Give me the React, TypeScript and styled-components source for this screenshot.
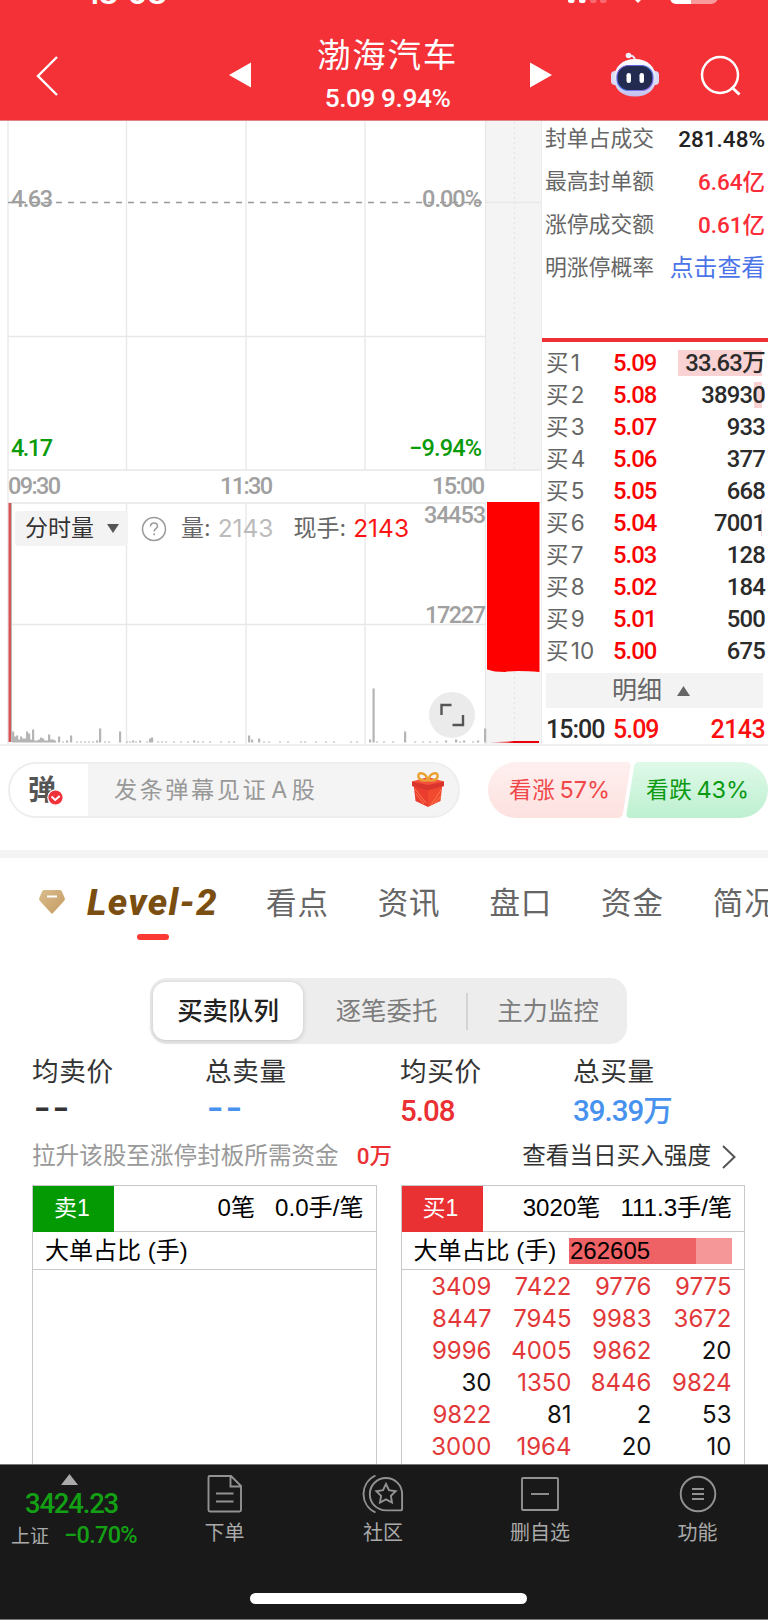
import React from "react";
import styled, { createGlobalStyle } from "styled-components";

const din = `Roboto, "Noto Sans CJK SC", sans-serif`;
const ui = `Inter, "Noto Sans CJK SC", sans-serif`;
const helv = `"Liberation Sans", "Noto Sans CJK SC", sans-serif`;

const GlobalStyle = createGlobalStyle`
  *, *::before, *::after { box-sizing: border-box; }
  body { margin: 0; background: #fff; font-family: ${din}; color: #2b2b2b; }
  svg { display: block; flex: none; }
`;

const Screen = styled.div`
  width: 768px;
  height: 1620px;
  display: flex;
  flex-direction: column;
  overflow: hidden;
  background: #fff;
  white-space: nowrap;
`;

/* ---------- header ---------- */

const Header = styled.header`
  position: relative;
  height: 121px;
  flex: none;
  display: flex;
  align-items: flex-start;
  background: #f33137;
  border-bottom: 1px solid #e08488;
  overflow: hidden;
`;

const StatusBar = styled.div`
  position: absolute;
  inset: 0 0 auto 0;
  height: 5px;
  overflow: hidden;
  color: #fff;
`;

const Clock = styled.span`
  position: absolute;
  left: 86px;
  top: -27px;
  font: 600 31px/40px ${ui};
  letter-spacing: -0.5px;
`;

const Raised = styled.span`
  position: relative;
  top: -5px;
`;

const StatusIcons = styled.svg`
  position: absolute;
  left: 560px;
  top: 0;
`;

const HeaderIcon = styled.svg<{ $ml: number; $mt: number }>`
  margin-left: ${(p) => p.$ml}px;
  margin-top: ${(p) => p.$mt}px;
`;

const TitleBlock = styled.div`
  width: 279px;
  padding: 34px 6px 0 0;
  text-align: center;
  color: #fff;
`;

const StockName = styled.h1`
  margin: 0;
  font: 400 33.5px/44px ${din};
  letter-spacing: 1.7px;
`;

const StockPrice = styled.div`
  font: 500 26.3px/40px ${din};
  letter-spacing: -0.45px;
`;

/* ---------- quote area ---------- */

const Quote = styled.section`
  height: 625px;
  flex: none;
  display: flex;
  border-bottom: 2px solid #efefef;
`;

const ChartPane = styled.div`
  position: relative;
  width: 541px;
  flex: none;
`;

const ChartSvg = styled.svg`
  text {
    font-family: ${din};
    font-size: 23.5px;
    font-weight: 500;
    fill: #a0a0a0;
  }
`;

const VolumeBar = styled.div`
  position: absolute;
  left: 15px;
  top: 390px;
  height: 35px;
  display: flex;
  align-items: center;
  font: 400 23px/35px ${ui};
  color: #666;
`;

const Selector = styled.div`
  width: 113px;
  height: 35px;
  padding-left: 10px;
  display: flex;
  align-items: center;
  gap: 13px;
  border-radius: 4px;
  background: #f3f3f3;
  color: #333;
`;

const HelpIcon = styled.svg`
  margin: 0 14px 0 13px;
`;

const VolumeValue = styled.span<{ $color: string; $gap: number }>`
  margin-left: 7px;
  margin-right: ${(p) => p.$gap}px;
  font-size: 24.5px;
  color: ${(p) => p.$color};
`;

const Expand = styled.div`
  position: absolute;
  left: 429px;
  top: 571px;
  width: 46px;
  height: 46px;
  border-radius: 50%;
  background: #ebebeb;
`;

const BookPane = styled.div`
  width: 227px;
  height: 623px;
  display: flex;
  flex-direction: column;
  border-left: 1px solid #ececec;
`;

const Facts = styled.div`
  height: 217px;
  flex: none;
  display: flex;
  flex-direction: column;
  gap: 7px;
  padding: 0 3px;
`;

const Fact = styled.div`
  height: 36px;
  display: flex;
  justify-content: space-between;
  font: 400 21.8px/36px ${din};
  color: #666;
`;

const FactValue = styled.span<{ $color?: string; $link?: boolean }>`
  color: ${(p) => p.$color ?? "#222"};
  font-size: ${(p) => (p.$link ? 23.8 : 22.5)}px;
  font-weight: ${(p) => (p.$link ? 400 : 500)};
`;

const RedRule = styled.div`
  height: 4px;
  flex: none;
  margin-bottom: 5px;
  background: #ee3037;
`;

const Level = styled.div`
  height: 32px;
  flex: none;
  padding: 0 3px 0 4px;
  display: grid;
  grid-template-columns: 67px 60px 1fr;
  font: 400 23.8px/32px ${din};
`;

const LevelName = styled.span`
  font: 400 22.5px/32px ${ui};
  word-spacing: -4px;
  color: #666;
`;

const LevelPrice = styled.span`
  font-weight: 500;
  letter-spacing: -1px;
  color: #fb0000;
`;

const LevelVolume = styled.span<{ $bar?: number }>`
  font-weight: 500;
  letter-spacing: -0.8px;
  text-align: right;
  color: #2b2b2b;
  background: linear-gradient(#f9d3d4, #f9d3d4) no-repeat right 3px top 3px /
    ${(p) => p.$bar ?? 0}px 26px;
`;

const DetailToggle = styled.div`
  height: 35px;
  flex: none;
  margin: 6px 5px 0 4px;
  padding-right: 7px;
  display: flex;
  align-items: center;
  justify-content: center;
  gap: 15px;
  background: #f3f3f3;
  font: 400 25px/33px ${din};
  color: #666;
`;

const Trade = styled.div`
  height: 36px;
  padding: 0 3px 0 4px;
  display: grid;
  grid-template-columns: 67px 60px 1fr;
  font: 500 25px/43px ${din};
`;

const TradeCell = styled.span<{ $color: string; $right?: boolean }>`
  color: ${(p) => p.$color};
  text-align: ${(p) => (p.$right ? "right" : "left")};
  letter-spacing: ${(p) => (p.$right ? -0.6 : -1)}px;
`;

/* ---------- comment row ---------- */

const CommentRow = styled.section`
  height: 104px;
  flex: none;
  padding: 16px 0 0 8px;
  display: flex;
`;

const CommentInput = styled.div`
  width: 452px;
  height: 56px;
  display: flex;
  align-items: center;
  border: 2px solid #eeeeee;
  border-radius: 28px;
  background: #f4f4f4;
  overflow: hidden;
  color: #999;
  font: 400 23.2px/52px ${ui};
  letter-spacing: 2.5px;
`;

const DanmuToggle = styled.div`
  position: relative;
  width: 78px;
  height: 52px;
  padding-left: 18px;
  background: #fff;
  color: #555;
  font: 700 28px/48px "Noto Sans CJK SC", sans-serif;
`;

const CheckBadge = styled.svg`
  position: absolute;
  left: 37px;
  top: 25px;
`;

const Placeholder = styled.span`
  margin-left: 26px;
  flex: 1;
`;

const Latin = styled.span`
  margin: 0 2px 0 3px;
`;

const GiftIcon = styled.svg`
  margin-right: 13px;
`;

const Vote = styled.div<{ $w: number; $ml: number; $color: string; $pl: number }>`
  position: relative;
  width: ${(p) => p.$w}px;
  height: 56px;
  margin-left: ${(p) => p.$ml}px;
  padding-left: ${(p) => p.$pl}px;
  color: ${(p) => p.$color};
  font: 400 22.6px/56px ${ui};
  letter-spacing: 0.6px;

  svg {
    position: absolute;
    inset: 0;
  }
  span {
    position: relative;
  }
`;

const Percent = styled.span`
  margin-left: 4px;
  font-size: 23.5px;
  letter-spacing: 0;
`;

/* ---------- tabs ---------- */

const Tabs = styled.nav`
  height: 128px;
  flex: none;
  border-top: 8px solid #f4f4f4;
  padding-left: 39px;
  display: flex;
  align-items: flex-start;
  overflow: hidden;
`;

const Gem = styled.svg`
  margin: 32px 22px 0 0;
`;

const ActiveTab = styled.div`
  width: 179px;
  flex: none;
  padding-top: 23px;
  font: italic 800 37px/44px ${din};
  letter-spacing: 1.3px;
  color: #7a4d10;

  &::after {
    content: "";
    display: block;
    width: 32px;
    height: 6px;
    margin: 9px 0 0 50px;
    border-radius: 3px;
    background: #fb3a34;
  }
`;

const Tab = styled.div`
  width: 111.7px;
  flex: none;
  padding-top: 24px;
  font: 400 30.5px/44px ${din};
  letter-spacing: 0.9px;
  color: #666;
`;

const Segments = styled.div`
  width: 477px;
  height: 66px;
  flex: none;
  margin-left: 150px;
  padding: 4px 3px;
  display: flex;
  align-items: center;
  border-radius: 17px;
  background: #ededed;
`;

const Segment = styled.div<{ $active?: boolean; $w: number }>`
  width: ${(p) => p.$w}px;
  height: 58px;
  padding-left: ${(p) => (p.$active ? 0 : 4)}px;
  border-radius: 13px;
  text-align: center;
  font: ${(p) => (p.$active ? 500 : 400)} 25.4px/55px "Noto Sans CJK SC", sans-serif;
  color: ${(p) => (p.$active ? "#222" : "#7d7d7d")};
  background: ${(p) => (p.$active ? "#fff" : "transparent")};
  box-shadow: ${(p) => (p.$active ? "0 1px 5px rgba(0,0,0,.18)" : "none")};
`;

const SegmentDivider = styled.div`
  width: 2px;
  height: 37px;
  background: #d4d4d4;
`;

/* ---------- statistics ---------- */

const Stats = styled.section`
  height: 88px;
  flex: none;
  padding: 8px 0 0 32px;
  display: grid;
  grid-template-columns: 173px 195px 173px 1fr;
`;

const StatLabel = styled.div`
  font: 400 26.6px/40px ${din};
  letter-spacing: 0.7px;
  color: #333;
`;

const StatValue = styled.div<{ $color: string; $dash?: boolean }>`
  font: ${(p) => (p.$dash ? `400 44px/34px "Liberation Mono", monospace` : `500 29.5px/38px ${din}`)};
  letter-spacing: ${(p) => (p.$dash ? -7.7 : -1)}px;
  margin-left: ${(p) => (p.$dash ? -3 : 0)}px;
  color: ${(p) => p.$color};
`;

const HintRow = styled.div`
  height: 53px;
  flex: none;
  padding: 5px 32px 0 32px;
  display: flex;
  font: 400 23.6px/38px ${din};
  color: #999;
`;

const HintAmount = styled.span`
  flex: 1;
  margin-left: 18px;
  font-weight: 500;
  font-size: 22.5px;
  color: #eb3033;
`;

const HintLink = styled.span`
  color: #333;
`;

const Chevron = styled.svg`
  margin: 8px 0 0 11px;
`;

/* ---------- order queues ---------- */

const Queues = styled.section`
  flex: 1;
  min-height: 0;
  padding-left: 32px;
  display: flex;
  gap: 24px;
  overflow: hidden;
`;

const Queue = styled.div`
  width: 344.5px;
  flex: none;
  height: 300px;
  border: 1px solid #c8c8c8;
  font: 400 24px/46px ${helv};
  color: #000;
`;

const QueueHead = styled.div`
  height: 46px;
  display: flex;
  border-bottom: 1px solid #c8c8c8;
`;

const Side = styled.div<{ $bg: string }>`
  width: 81px;
  height: 46px;
  margin-right: auto;
  padding-right: 3px;
  text-align: center;
  background: ${(p) => p.$bg};
  color: #fff;
  font-size: 23px;
  line-height: 44px;
`;

const HeadText = styled.span<{ $mr: number }>`
  margin-right: ${(p) => p.$mr}px;
  font-size: 24.1px;
  line-height: 44px;
`;

const BigOrders = styled.div`
  height: 38px;
  padding: 0 12px;
  display: flex;
  align-items: center;
  justify-content: space-between;
  border-bottom: 1px solid #c8c8c8;
  line-height: 37px;
`;

const BigBar = styled.div`
  width: 163px;
  height: 26px;
  padding-left: 1px;
  line-height: 26px;
  background: linear-gradient(90deg, #ee6164 78%, #f59799 78%);
`;

const Orders = styled.div`
  padding: 1px 12px 0 10px;
  display: grid;
  grid-template-columns: repeat(4, 80px);
  text-align: right;
  font: 400 24px/32px ${ui};
`;

const Order = styled.span<{ $big: boolean }>`
  color: ${(p) => (p.$big ? "#e2383a" : "#111")};
`;

/* ---------- bottom bar ---------- */

const BottomBar = styled.footer`
  position: relative;
  height: 156px;
  flex: none;
  display: flex;
  background: #191919;
  border-top: 1px solid #777;
  border-bottom: 1px solid #777;
`;

const IndexBox = styled.div`
  width: 148px;
  flex: none;
  padding-top: 9px;
  display: flex;
  flex-direction: column;
  color: #14a014;
`;

const IndexArrow = styled.svg`
  margin-left: 61px;
`;

const IndexValue = styled.div`
  padding-left: 25px;
  font: 500 27.5px/38px ${din};
  letter-spacing: -1.2px;
`;

const IndexChange = styled.div`
  padding-left: 11px;
  display: flex;
  gap: 15px;
  font: 500 23.5px/25px ${din};
  letter-spacing: -0.7px;
`;

const IndexName = styled.span`
  font-size: 19px;
  font-weight: 400;
  line-height: 27px;
  letter-spacing: 0;
  color: #aaa;
`;

const NavItem = styled.div<{ $w: number }>`
  width: ${(p) => p.$w}px;
  flex: none;
  padding-top: 9px;
  display: flex;
  flex-direction: column;
  align-items: center;
  font: 400 20px/30px ${din};
  color: #aaa;

  svg {
    margin-bottom: 4px;
  }
`;

const HomeIndicator = styled.div`
  position: absolute;
  left: 250px;
  bottom: 15px;
  width: 277px;
  height: 11px;
  border-radius: 6px;
  background: #fff;
`;

/* ---------- data ---------- */

const facts = [
  { name: "封单占成交", value: "281.48%" },
  { name: "最高封单额", value: "6.64亿", color: "#fb2b37" },
  { name: "涨停成交额", value: "0.61亿", color: "#fb2b37" },
  { name: "明涨停概率", value: "点击查看", color: "#4b74e8", link: true },
];

const levels: [string, string, number?][] = [
  ["5.09", "33.63万", 84],
  ["5.08", "38930", 8],
  ["5.07", "933"],
  ["5.06", "377"],
  ["5.05", "668"],
  ["5.04", "7001", 1],
  ["5.03", "128"],
  ["5.02", "184"],
  ["5.01", "500"],
  ["5.00", "675"],
];

const stats = [
  { name: "均卖价", value: "--", color: "#333" },
  { name: "总卖量", value: "--", color: "#4892ef" },
  { name: "均买价", value: "5.08", color: "#eb3033" },
  { name: "总买量", value: "39.39万", color: "#4892ef" },
];

const orders = [
  3409, 7422, 9776, 9775, 8447, 7945, 9983, 3672, 9996, 4005, 9862, 20, 30,
  1350, 8446, 9824, 9822, 81, 2, 53, 3000, 1964, 20, 10,
];

/* [x, height] of every minute volume bar */
const volumes: [number, number][] = [
  [12, 11], [14, 6], [16, 7], [18, 3], [20, 6], [22, 4], [24, 4], [26, 11],
  [28, 9], [30, 3], [32, 13], [34, 2], [36, 2], [38, 3], [40, 5], [42, 4],
  [44, 2], [46, 2], [48, 8], [50, 3], [52, 3], [54, 2], [58, 6], [62, 1],
  [66, 2], [70, 7], [76, 1], [80, 1], [84, 1], [88, 1], [92, 1], [96, 2],
  [99, 14], [104, 1], [108, 1], [119, 11], [126, 1], [129, 1], [132, 2],
  [135, 1], [139, 2], [146, 1], [149, 4], [151, 5], [157, 1], [161, 1],
  [165, 1], [173, 1], [180, 1], [187, 1], [193, 2], [197, 1], [202, 1],
  [209, 1], [220, 1], [228, 1], [233, 1], [248, 7], [251, 3], [258, 4],
  [263, 1], [268, 1], [279, 1], [287, 1], [300, 1], [304, 1], [315, 1],
  [325, 1], [333, 1], [350, 1], [356, 1], [369, 3], [372.5, 54], [376, 1],
  [383, 1], [392, 1], [404, 11], [414, 1], [422, 1], [429, 1], [436, 1],
  [445, 2], [455, 3], [459, 1], [463, 2], [472, 1], [477, 2], [484, 14],
];

/* ---------- components ---------- */

function Chart() {
  return (
    <ChartSvg width="541" height="623" viewBox="0 121 541 623">
      <rect x="486" y="120" width="56" height="351" fill="#f4f4f4" />
      <rect x="486" y="671" width="56" height="75" fill="#f4f4f4" />
      <g stroke="#e8e8e8" strokeWidth="1.4" fill="none">
        <path d="M8 120V746M126.5 120V470M246 120V470M365 120V470M485.5 120V470M8 336.5H486M8 470H541" />
        <path d="M8 503H486M8 624.5H486M126.5 503V745M246 503V745M365 503V745M485.5 503V745M486 202.5H541" />
      </g>
      <path d="M514.5 122V470M514.5 672V740" stroke="#e4e4e4" strokeWidth="1.2" strokeDasharray="2 3" />
      <path d="M8 202.5H486" stroke="#999" strokeWidth="1.4" strokeDasharray="6 6" />
      <text x="11" y="206.5" textLength="42">4.63</text>
      <text x="422" y="206.5" textLength="60">0.00%</text>
      <text x="11" y="456" textLength="42" style={{ fill: "#0a9a0a" }}>4.17</text>
      <text x="409" y="456" textLength="73" style={{ fill: "#0a9a0a" }}>−9.94%</text>
      <text x="8" y="493.5" textLength="53">09:30</text>
      <text x="220" y="493.5" textLength="53">11:30</text>
      <text x="432" y="493.5" textLength="53">15:00</text>
      <text x="424" y="522.5" textLength="62">34453</text>
      <text x="425" y="622.5" textLength="61">17227</text>
      <g fill="#b5b5b5">
        {volumes.map(([x, h]) => (
          <rect key={x} x={x} y={742.5 - h} width="2.2" height={h} />
        ))}
      </g>
      <rect x="8.5" y="503" width="2.6" height="239" fill="#d95555" />
      <rect x="11" y="503" width="1" height="239" fill="#bbb" />
      <path d="M487 502H539.5V672Q515 670 505 672Q494 672 487 669.5Z" fill="#fe0000" />
      <path d="M490 742Q510 742 514 741H539V743H514Z" fill="#e8000a" />
    </ChartSvg>
  );
}

function Robot() {
  return (
    <HeaderIcon $ml={59} $mt={52} width="48" height="46" viewBox="0 0 48 46">
      <defs>
        <linearGradient id="shell" x1="0" y1="0" x2="0" y2="1">
          <stop offset="0" stopColor="#fff" />
          <stop offset="0.6" stopColor="#dcdff8" />
          <stop offset="1" stopColor="#c3bfee" />
        </linearGradient>
        <linearGradient id="rim" x1="0" y1="0" x2="1" y2="1">
          <stop offset="0" stopColor="#7a4bd8" />
          <stop offset="0.5" stopColor="#4b7df0" />
          <stop offset="1" stopColor="#a06bf0" />
        </linearGradient>
      </defs>
      <path d="M18 4q6-1 6 5" fill="none" stroke="#e5e5fa" strokeWidth="2" />
      <circle cx="17.500" cy="3.500" r="2.800" fill="#f3f1ff" />
      <rect x="0" y="19" width="8" height="14" rx="4" fill="#d9daf6" />
      <rect x="40" y="19" width="8" height="14" rx="4" fill="#d9daf6" />
      <path d="M24 7C36.500 7 45 15 45 26S37.500 44.500 24 44.500 3 37 3 26 11.500 7 24 7Z" fill="url(#shell)" />
      <rect x="6" y="13.500" width="36" height="25" rx="11.500" fill="#232b50" stroke="url(#rim)" strokeWidth="1.200" />
      <rect x="15.500" y="21" width="4.500" height="10" rx="2.200" fill="#fff" />
      <rect x="28.500" y="21" width="4.500" height="10" rx="2.200" fill="#fff" />
    </HeaderIcon>
  );
}

function Gift() {
  return (
    <GiftIcon width="34" height="36" viewBox="0 0 34 36">
      <path d="M2.500 11 17 16V35L4.500 29Z" fill="#ea3d30" />
      <path d="M31.500 11 17 16V35L29.500 29Z" fill="#f0492f" />
      <path d="M1 9.500 17 5l16 4.500V14L17 18.500 1 14Z" fill="#f2513c" />
      <path d="M1 9.500 17 13l16-3.500V14L17 18.500 1 14Z" fill="#d9352c" />
      <path d="M5 22l8 10M4 17l11 14M30 18 20 33M30 24l-7 8" stroke="#ff7a4d" strokeWidth="1" />
      <g fill="none" stroke="#e9a233" strokeWidth="2.400">
        <path d="M17 8C14-1 6 0 7.500 5q2 5 9.500 3Z" />
        <path d="M17 8C20-1 28 0 26.500 5q-2 5-9.500 3Z" />
      </g>
    </GiftIcon>
  );
}

export default function App() {
  return (
    <Screen>
      <GlobalStyle />
      <Header>
        <StatusBar>
          <Clock>
            18<Raised>:</Raised>08
          </Clock>
          <StatusIcons width="170" height="5" viewBox="0 0 170 5">
            <rect x="8" y="-8" width="6.500" height="11" rx="2" fill="#fff" />
            <rect x="19" y="-8" width="6.500" height="11" rx="2" fill="#fff" />
            <rect x="30" y="-8" width="6.500" height="11" rx="2" fill="#f9686c" />
            <rect x="40" y="-8" width="6.500" height="11" rx="2" fill="#f9686c" />
            <path d="M74-1h8l-4 4Z" fill="#fff" />
            <rect x="110" y="-20" width="48" height="24" rx="7" fill="#f99a9d" />
            <path d="M131-20V4H117q-7 0-7-7V-20Z" fill="#fff" />
          </StatusIcons>
        </StatusBar>
        <HeaderIcon $ml={36} $mt={56} width="22" height="40" viewBox="0 0 22 40" fill="none" stroke="#fff" strokeWidth="2.4">
          <path d="M21 1 2 20l19 19" />
        </HeaderIcon>
        <HeaderIcon $ml={171} $mt={62} width="22" height="26" viewBox="0 0 22 26">
          <path d="M0 13 22 .5v25Z" fill="#fff" />
        </HeaderIcon>
        <TitleBlock>
          <StockName>渤海汽车</StockName>
          <StockPrice>5.09 9.94%</StockPrice>
        </TitleBlock>
        <HeaderIcon $ml={0} $mt={62} width="22" height="26" viewBox="0 0 22 26">
          <path d="M22 13 0 .5v25Z" fill="#fff" />
        </HeaderIcon>
        <Robot />
        <HeaderIcon $ml={41} $mt={55} width="42" height="42" viewBox="0 0 42 42" fill="none" stroke="#fff" strokeWidth="2.500">
          <circle cx="20" cy="20" r="18" />
          <path d="m31.500 32 8 7.500" strokeWidth="3" />
        </HeaderIcon>
      </Header>

      <Quote>
        <ChartPane>
          <Chart />
          <VolumeBar>
            <Selector>
              分时量
              <svg width="12" height="9" viewBox="0 0 12 9">
                <path d="M0 0h12L6 9Z" fill="#555" />
              </svg>
            </Selector>
            <HelpIcon width="26" height="26" viewBox="0 0 26 26" fill="none" stroke="#999" strokeWidth="1.500">
              <circle cx="13" cy="13" r="11.500" />
              <path d="M9.500 10.500q0-3.500 3.500-3.500t3.500 3.200c0 2.300-3.400 2.600-3.400 5.300M13.100 17.300v2" />
            </HelpIcon>
            <span>量:</span>
            <VolumeValue $color="#bbb" $gap={20}>2143</VolumeValue>
            <span>现手:</span>
            <VolumeValue $color="#fb1414" $gap={0}>2143</VolumeValue>
          </VolumeBar>
          <Expand>
            <svg width="46" height="46" viewBox="0 0 46 46" fill="none" stroke="#555" strokeWidth="2.400">
              <path d="M12.500 23v-10h10M34 23v10H23.500" />
            </svg>
          </Expand>
        </ChartPane>
        <BookPane>
          <Facts>
            {facts.map((f) => (
              <Fact key={f.name}>
                <span>{f.name}</span>
                <FactValue $color={f.color} $link={f.link}>{f.value}</FactValue>
              </Fact>
            ))}
          </Facts>
          <RedRule />
          {levels.map(([price, volume, bar], i) => (
            <Level key={price}>
              <LevelName>买 {i + 1}</LevelName>
              <LevelPrice>{price}</LevelPrice>
              <LevelVolume $bar={bar}>{volume}</LevelVolume>
            </Level>
          ))}
          <DetailToggle>
            明细
            <svg width="13" height="10" viewBox="0 0 13 10">
              <path d="M0 10h13L6.500 0Z" fill="#666" />
            </svg>
          </DetailToggle>
          <Trade>
            <TradeCell $color="#2b2b2b">15:00</TradeCell>
            <TradeCell $color="#fb0f0f">5.09</TradeCell>
            <TradeCell $color="#fb0f0f" $right>2143</TradeCell>
          </Trade>
        </BookPane>
      </Quote>

      <CommentRow>
        <CommentInput>
          <DanmuToggle>
            弹
            <CheckBadge width="17" height="17" viewBox="0 0 17 17">
              <circle cx="8.500" cy="8.500" r="7.700" fill="#f0323a" stroke="#fff" strokeWidth="1.200" />
              <path d="m4.500 7.500 3.700 3.500 4.500-4" fill="none" stroke="#fff" strokeWidth="2" />
            </CheckBadge>
          </DanmuToggle>
          <Placeholder>
            发条弹幕见证<Latin>A</Latin>股
          </Placeholder>
          <Gift />
        </CommentInput>
        <Vote $w={143} $ml={28} $pl={21} $color="#f0484a">
          <svg width="143" height="56" viewBox="0 0 143 56">
            <defs>
              <linearGradient id="up" x1="0" y1="0" x2="0" y2="1">
                <stop offset="0" stopColor="#fef0ef" />
                <stop offset="1" stopColor="#fde1df" />
              </linearGradient>
            </defs>
            <path d="M28 0H139q4 0 3.500 4L135 51q-1 5-5 5H28A28 28 0 0 1 28 0Z" fill="url(#up)" />
          </svg>
          <span>看涨</span>
          <Percent>57%</Percent>
        </Vote>
        <Vote $w={142} $ml={-5} $pl={20} $color="#0c9a12">
          <svg width="142" height="56" viewBox="0 0 142 56">
            <defs>
              <linearGradient id="down" x1="0" y1="0" x2="0" y2="1">
                <stop offset="0" stopColor="#dff9e9" />
                <stop offset="1" stopColor="#bdf0d0" />
              </linearGradient>
            </defs>
            <path d="M13 0H114A28 28 0 0 1 114 56H4Q0 56 .5 52L8 4.500Q9 0 13 0Z" fill="url(#down)" />
          </svg>
          <span>看跌</span>
          <Percent>43%</Percent>
        </Vote>
      </CommentRow>

      <Tabs>
        <Gem width="26" height="24" viewBox="0 0 26 24">
          <defs>
            <linearGradient id="gold" x1="0" y1="0" x2="1" y2="1">
              <stop offset="0" stopColor="#d9bd8e" />
              <stop offset="1" stopColor="#c59a60" />
            </linearGradient>
          </defs>
          <path d="M5.500 0H20.500Q22 0 22.800 1.300L25.500 7.500Q26.500 9.500 25 11L14 23Q13 24 12 23L1 11Q-.5 9.500.5 7.500L3.200 1.300Q4 0 5.500 0Z" fill="url(#gold)" />
          <path d="M8 6.500h10" stroke="#fff" strokeWidth="2" />
        </Gem>
        <ActiveTab>Level-2</ActiveTab>
        <Tab>看点</Tab>
        <Tab>资讯</Tab>
        <Tab>盘口</Tab>
        <Tab>资金</Tab>
        <Tab>简况</Tab>
      </Tabs>

      <Segments>
        <Segment $active $w={150}>买卖队列</Segment>
        <Segment $w={163}>逐笔委托</Segment>
        <SegmentDivider />
        <Segment $w={156}>主力监控</Segment>
      </Segments>

      <Stats>
        {stats.map((s) => (
          <div key={s.name}>
            <StatLabel>{s.name}</StatLabel>
            <StatValue $color={s.color} $dash={s.value === "--"}>{s.value}</StatValue>
          </div>
        ))}
      </Stats>
      <HintRow>
        <span>拉升该股至涨停封板所需资金</span>
        <HintAmount>0万</HintAmount>
        <HintLink>查看当日买入强度</HintLink>
        <Chevron width="14" height="24" viewBox="0 0 14 24" fill="none" stroke="#555" strokeWidth="2">
          <path d="m1 1 11.500 11L1 23" />
        </Chevron>
      </HintRow>

      <Queues>
        <Queue>
          <QueueHead>
            <Side $bg="#049a04">卖1</Side>
            <HeadText $mr={20}>0笔</HeadText>
            <HeadText $mr={12}>0.0手/笔</HeadText>
          </QueueHead>
          <BigOrders>大单占比 (手)</BigOrders>
        </Queue>
        <Queue>
          <QueueHead>
            <Side $bg="#e93033">买1</Side>
            <HeadText $mr={20}>3020笔</HeadText>
            <HeadText $mr={12}>111.3手/笔</HeadText>
          </QueueHead>
          <BigOrders>
            大单占比 (手)
            <BigBar>262605</BigBar>
          </BigOrders>
          <Orders>
            {orders.map((o, i) => (
              <Order key={i} $big={o > 1000}>{o}</Order>
            ))}
          </Orders>
        </Queue>
      </Queues>

      <BottomBar>
        <IndexBox>
          <IndexArrow width="17" height="11" viewBox="0 0 17 11">
            <path d="M0 11h17L8.500 0Z" fill="#aaa" />
          </IndexArrow>
          <IndexValue>3424.23</IndexValue>
          <IndexChange>
            <IndexName>上证</IndexName>−0.70%
          </IndexChange>
        </IndexBox>
        <NavItem $w={153}>
          <svg width="38" height="40" viewBox="0 0 38 40" fill="none" stroke="#929292" strokeWidth="1.900">
            <path d="M3.500 2H25L35 12V36q0 1.500-1.500 1.500H4q-1.500 0-1.500-1.500V3.500Q2.500 2 3.500 2ZM24.500 2V12.500H35M10 19.500H27.500M10 27.500H27.500" />
          </svg>
          下单
        </NavItem>
        <NavItem $w={164}>
          <svg width="42" height="40" viewBox="0 0 42 40" fill="none" stroke="#929292" strokeWidth="1.900">
            <path d="M13.500 1.500C-2.500 9-2.500 31 13.500 38.500" />
            <path d="M24 4A16.200 16.200 0 0 0 24 36.400H38.500q1.600 0 1.600-1.600V20A16.100 16.100 0 0 0 24 4Z" />
            <path d="m24 10 3 6.200 6.700 1-4.800 4.700 1.100 6.600-6-3.100-6 3.100 1.100-6.600-4.800-4.700 6.700-1Z" />
          </svg>
          社区
        </NavItem>
        <NavItem $w={150}>
          <svg width="38" height="40" viewBox="0 0 38 40" fill="none" stroke="#929292" strokeWidth="1.900">
            <rect x="1" y="4" width="36" height="32" rx="1" />
            <path d="M10 20H28" />
          </svg>
          删自选
        </NavItem>
        <NavItem $w={165}>
          <svg width="38" height="40" viewBox="0 0 38 40" fill="none" stroke="#929292" strokeWidth="1.900">
            <circle cx="19" cy="20" r="17.300" />
            <path d="M13 15H25M13 20H25M13 25H25" />
          </svg>
          功能
        </NavItem>
        <HomeIndicator />
      </BottomBar>
    </Screen>
  );
}
